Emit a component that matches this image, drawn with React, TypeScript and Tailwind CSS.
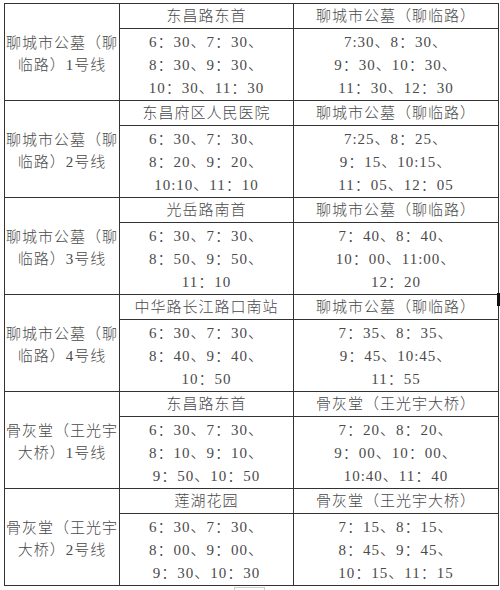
import React from 'react';

type Route = {
  name: [string, string];
  from: string;
  to: string;
  out: string[];
  back: string[];
};

const routes: Route[] = [
  {
    name: ['聊城市公墓（聊', '临路）1号线'],
    from: '东昌路东首',
    to: '聊城市公墓（聊临路）',
    out: ['6：30、7：30、', '8：30、9：30、', '10：30、11：30'],
    back: ['7:30、8：30、', '9：30、10：30、', '11：30、12：30'],
  },
  {
    name: ['聊城市公墓（聊', '临路）2号线'],
    from: '东昌府区人民医院',
    to: '聊城市公墓（聊临路）',
    out: ['6：30、7：30、', '8：20、9：20、', '10:10、11：10'],
    back: ['7:25、8：25、', '9：15、10:15、', '11：05、12：05'],
  },
  {
    name: ['聊城市公墓（聊', '临路）3号线'],
    from: '光岳路南首',
    to: '聊城市公墓（聊临路）',
    out: ['6：30、7：30、', '8：50、9：50、', '11：10'],
    back: ['7：40、8：40、', '10：00、11:00、', '12：20'],
  },
  {
    name: ['聊城市公墓（聊', '临路）4号线'],
    from: '中华路长江路口南站',
    to: '聊城市公墓（聊临路）',
    out: ['6：30、7：30、', '8：40、9：40、', '10：50'],
    back: ['7：35、8：35、', '9：45、10:45、', '11：55'],
  },
  {
    name: ['骨灰堂（王光宇', '大桥）1号线'],
    from: '东昌路东首',
    to: '骨灰堂（王光宇大桥）',
    out: ['6：30、7：30、', '8：10、9：10、', '9：50、10：50'],
    back: ['7：20、8：20、', '9：00、10：00、', '10:40、11：40'],
  },
  {
    name: ['骨灰堂（王光宇', '大桥）2号线'],
    from: '莲湖花园',
    to: '骨灰堂（王光宇大桥）',
    out: ['6：30、7：30、', '8：00、9：00、', '9：30、10：30'],
    back: ['7：15、8：15、', '8：45、9：45、', '10：15、11：15'],
  },
];

const cell = 'border border-[#333] text-center align-middle p-0';

export default function App() {
  return (
    <div
      className="relative w-[500px] h-[590px] bg-white text-[#4a4a4a] text-[15px] tracking-[1px] font-light"
      style={{ fontFamily: '"Liberation Serif", "Noto Sans CJK SC", serif' }}
    >
      <div className="pt-[3px] pl-[4px]">
        <table className="border-collapse table-fixed w-[494px]">
          <colgroup>
            <col className="w-[115px]" />
            <col className="w-[174px]" />
            <col className="w-[205px]" />
          </colgroup>
          <tbody>
            {routes.map((r, i) => (
              <React.Fragment key={i}>
                <tr className="h-[25px]">
                  <td rowSpan={2} className={cell}>
                    <div className="leading-[22px] pt-[3px]">
                      <div className="whitespace-nowrap">{r.name[0]}</div>
                      <div className="whitespace-nowrap">{r.name[1]}</div>
                    </div>
                  </td>
                  <td className={cell}>
                    <div className="leading-[24px] whitespace-nowrap">{r.from}</div>
                  </td>
                  <td className={cell}>
                    <div className="leading-[24px] whitespace-nowrap">{r.to}</div>
                  </td>
                </tr>
                <tr className="h-[72px]">
                  <td className={cell}>
                    <div className="leading-[23px] pt-[1px]">
                      {r.out.map((t, j) => (
                        <div key={j} className="whitespace-nowrap">{t}</div>
                      ))}
                    </div>
                  </td>
                  <td className={cell}>
                    <div className="leading-[23px] pt-[1px]">
                      {r.back.map((t, j) => (
                        <div key={j} className="whitespace-nowrap">{t}</div>
                      ))}
                    </div>
                  </td>
                </tr>
              </React.Fragment>
            ))}
          </tbody>
        </table>
      </div>
      <div className="absolute left-[497px] top-[293px] w-[3px] h-[13px] bg-[#111]" />
      <div className="absolute left-[234px] top-[587px] w-[31px] h-[4px] border border-[#ccc]" />
    </div>
  );
}
